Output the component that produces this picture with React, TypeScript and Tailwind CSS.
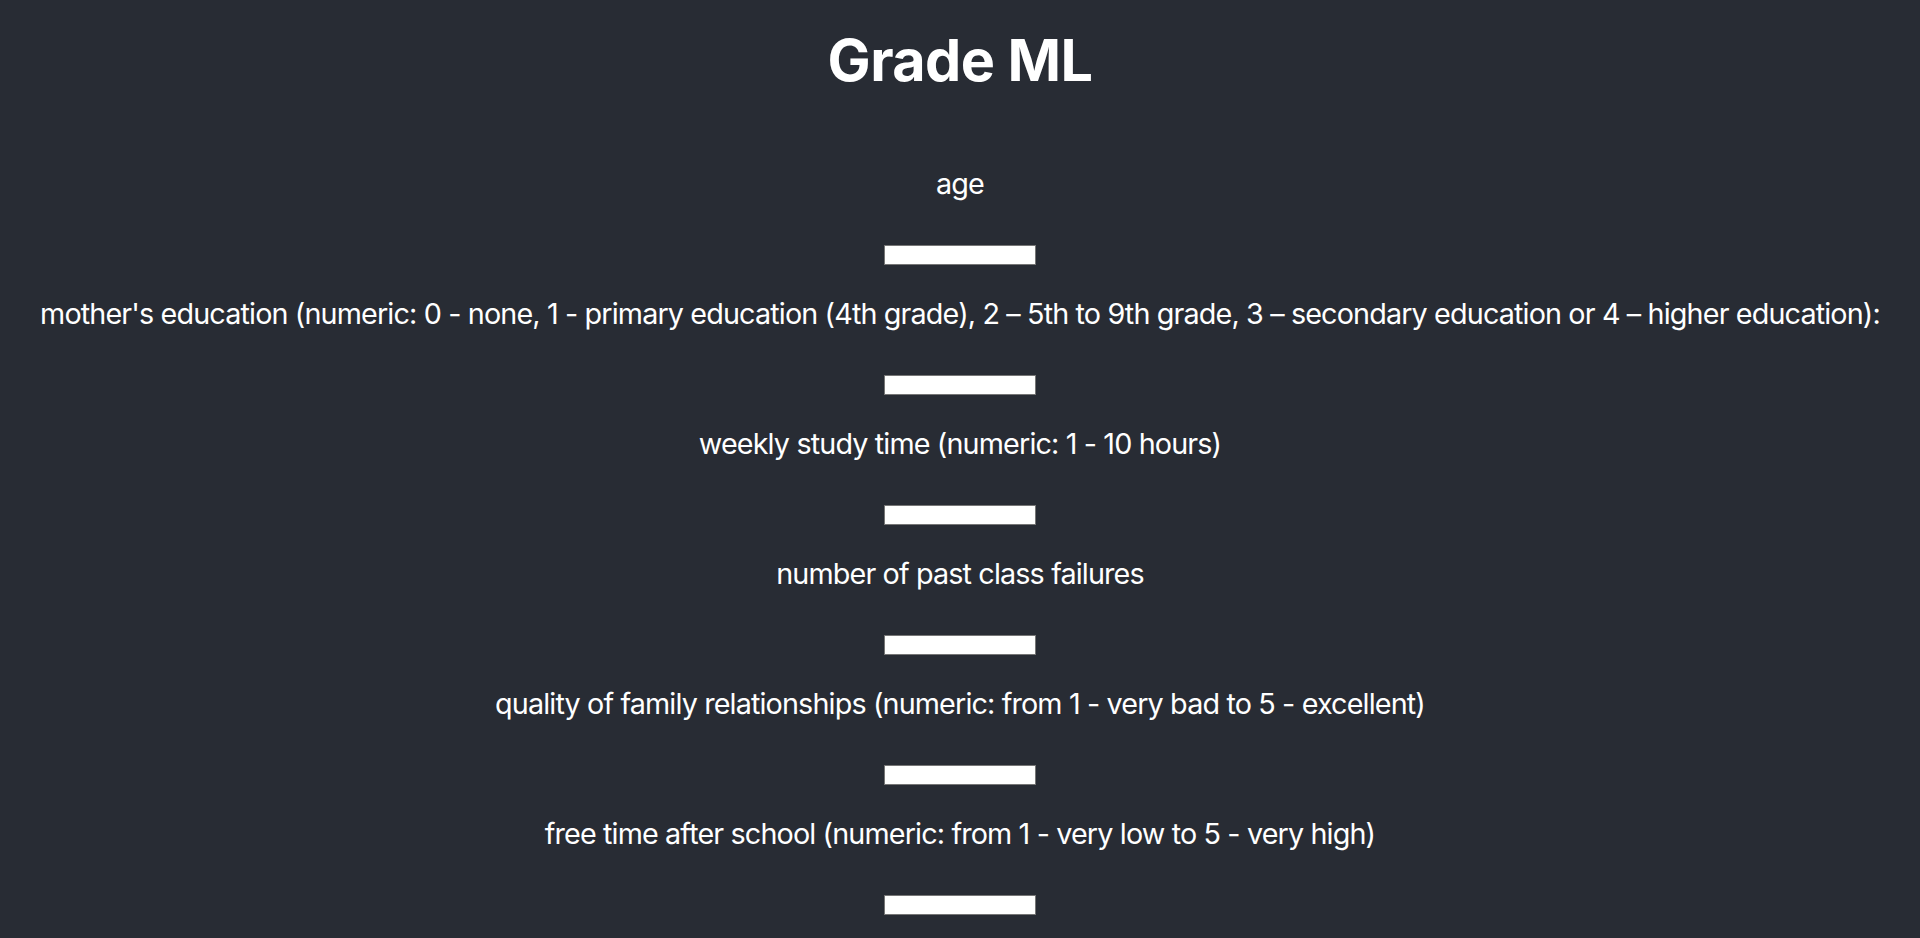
import type { JSX } from "react";

const fields: string[] = [
  "age",
  "mother's education (numeric: 0 - none, 1 - primary education (4th grade), 2 – 5th to 9th grade, 3 – secondary education or 4 – higher education):",
  "weekly study time (numeric: 1 - 10 hours)",
  "number of past class failures",
  "quality of family relationships (numeric: from 1 - very bad to 5 - excellent)",
  "free time after school (numeric: from 1 - very low to 5 - very high)",
];

function Field({ label }: { label: string }): JSX.Element {
  return (
    <div className="flex flex-col items-center">
      <label className="mt-px text-[28.76px] leading-[35px] tracking-[-0.03em] whitespace-nowrap">
        {label}
      </label>
      <input
        type="text"
        className="mt-[44px] mb-[30px] h-[20px] w-[152px] border border-[#767676] bg-white text-black"
      />
    </div>
  );
}

export default function App(): JSX.Element {
  return (
    <div className="min-h-screen bg-[#282c34] text-white font-['Inter','Noto_Sans',sans-serif] flex flex-col items-center overflow-hidden">
      <h1 className="mt-[26px] text-[57.5px] leading-[1.21] tracking-[-0.01em] font-bold">
        Grade ML
      </h1>
      <form className="mt-[69px] flex flex-col items-center">
        {fields.map((f) => (
          <Field key={f} label={f} />
        ))}
      </form>
    </div>
  );
}
